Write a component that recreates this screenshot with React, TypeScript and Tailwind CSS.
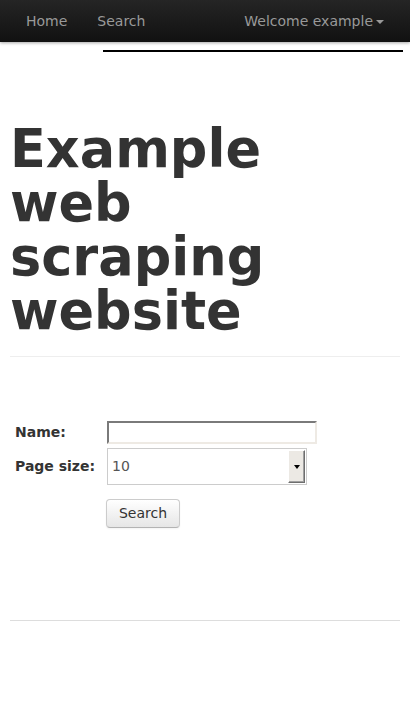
export default function App() {
  return (
    <div className="min-h-[704px] bg-white font-['DejaVu_Sans',sans-serif] text-[14px] text-[#333]">
      {/* navbar */}
      <div className="flex h-[42px] items-center justify-between bg-gradient-to-b from-[#252525] to-[#111] px-[11px] shadow-[0_1px_3px_rgba(0,0,0,0.35)]">
        <div className="flex">
          <a className="px-[15px] text-[#999]">Home</a>
          <a className="px-[15px] text-[#999]">Search</a>
        </div>
        <a className="flex items-center px-[15px] text-[#999]">
          Welcome example
          <span className="ml-[3px] mt-[1px] h-0 w-0 border-x-[4px] border-t-[4px] border-x-transparent border-t-[#999]" />
        </a>
      </div>
      <div className="ml-[103px] mt-[8px] h-[2px] w-[300px] bg-black" />

      <div className="px-[10px]">
        <h1 className="mt-[70px] text-[52.5px] font-bold leading-[54px] text-[#333]">
          Example
          <br />
          web
          <br />
          scraping
          <br />
          website
        </h1>
        <hr className="mt-[18px] border-t border-[#eee]" />

        <form className="mt-[64px] flex flex-col pl-[5px]">
          <div className="flex items-center">
            <label className="w-[92px] font-bold">Name:</label>
            <input
              type="text"
              className="h-[23px] w-[210px] border-2 border-b-[#eeeae4] border-l-[#7a7a7a] border-r-[#eeeae4] border-t-[#7a7a7a] bg-white outline-none"
            />
          </div>
          <div className="mt-[4px] flex items-center">
            <label className="w-[92px] font-bold">Page size:</label>
            <div className="flex h-[37px] w-[200px] items-center justify-between border border-[#ccc] bg-white pl-[4px] pr-[1px]">
              <span className="text-[#555]">10</span>
              <div className="flex h-[33px] w-[17px] items-center justify-center border border-b-[#6e6e6e] border-l-[#fff] border-r-[#6e6e6e] border-t-[#fff] bg-[#ece9e4] shadow-[inset_-1px_-1px_0_#a0a0a0]">
                <span className="h-0 w-0 border-x-[3.5px] border-t-[4px] border-x-transparent border-t-black" />
              </div>
            </div>
          </div>
          <div className="ml-[91px] mt-[14px]">
            <button
              type="button"
              className="h-[29px] w-[74px] rounded-[4px] border border-[#ccc] border-b-[#b3b3b3] bg-gradient-to-b from-white to-[#e6e6e6] text-[14px] text-[#333] shadow-[inset_0_1px_0_rgba(255,255,255,0.2),0_1px_2px_rgba(0,0,0,0.05)]"
            >
              Search
            </button>
          </div>
        </form>

        <hr className="mt-[92px] border-t border-[#ddd]" />
      </div>
    </div>
  );
}
